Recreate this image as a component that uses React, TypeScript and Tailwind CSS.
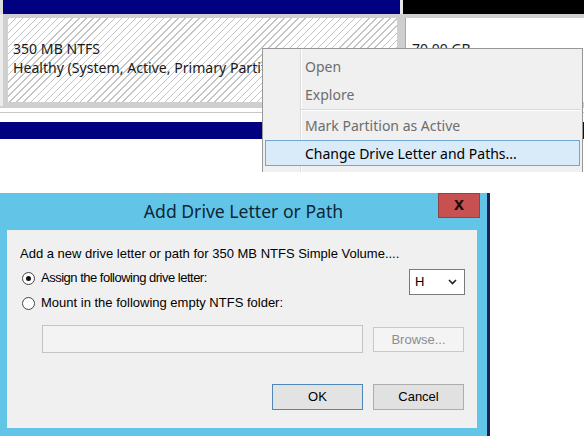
import { type ReactNode } from 'react'

const segoe = "font-['Noto_Sans','Open_Sans',sans-serif]"

function DiskView() {
  return (
    <div className={`h-[193px] flex flex-col ${segoe}`}>
      <div className="flex h-[14px]">
        <div className="w-[3px] bg-[#dcdcdc]" />
        <div className="w-[397px] bg-[#000080]" />
        <div className="w-[3px] bg-[#e6e6e6]" />
        <div className="flex-1 bg-black" />
      </div>
      <div className="flex h-[94px] bg-[#cfcfcf] pt-[4px] pb-[6px]">
        <div className="w-[3px] -my-[4px] bg-[#ececec]" />
        <div className="ml-[5px] w-[389px] bg-[image:repeating-linear-gradient(135deg,#c4c4c4_0px,#c4c4c4_1px,#ffffff_1px,#ffffff_5px)] pl-[5px] pt-[21px] text-[14.1px] leading-[19px] text-[#1a1a1a] overflow-hidden whitespace-nowrap">
          <div>350 MB NTFS</div>
          <div>Healthy (System, Active, Primary Partition)</div>
        </div>
        <div className="w-[8px]" />
        <div className="flex-1 bg-white border-l border-[#a8a8a8] pl-[6px] pt-[21px] text-[14px] leading-[19px] text-[#1a1a1a]">
          70.00 GB
        </div>
      </div>
      <div className="h-[4px] bg-white" />
      <div className="h-[1px] bg-[#c8c8c8]" />
      <div className="h-[9px] bg-white" />
      <div className="h-[17px] bg-[#000080]" />
      <div className="flex-1 bg-white" />
    </div>
  )
}

function MenuItem({ children, disabled, active }: { children: ReactNode; disabled?: boolean; active?: boolean }) {
  return (
    <div className="h-[28px] px-[2px] py-[1px]">
      <div
        className={`h-full flex items-center pl-[39px] border ${
          active ? 'border-[#6fa6d2] bg-[#d9eaf9]' : 'border-transparent'
        } ${disabled ? 'text-[#6d6d6d]' : 'text-black'}`}
      >
        {children}
      </div>
    </div>
  )
}

function ContextMenu() {
  return (
    <div className={`absolute left-[262px] top-[48px] w-[321px] h-[124px] bg-[#f0f0f0] border border-b-0 border-[#979797] pt-[3px] text-[14px] ${segoe}`}>
      <div className="absolute left-[37px] top-0 bottom-0 w-[1px] bg-[#dcdcdc]" />
      <div className="absolute left-[38px] top-0 bottom-0 w-[1px] bg-white" />
      <div className="relative">
        <MenuItem disabled>Open</MenuItem>
        <MenuItem disabled>Explore</MenuItem>
        <div className="h-[3px] ml-[38px] mr-[2px] flex flex-col justify-center">
          <div className="h-[1px] bg-[#d7d7d7]" />
          <div className="h-[1px] bg-white" />
        </div>
        <MenuItem disabled>Mark Partition as Active</MenuItem>
        <MenuItem active>Change Drive Letter and Paths...</MenuItem>
      </div>
    </div>
  )
}

function Radio({ checked }: { checked?: boolean }) {
  return (
    <div className="w-[13px] h-[13px] shrink-0 rounded-full border border-[#444] bg-white flex items-center justify-center">
      {checked && <div className="w-[5px] h-[5px] rounded-full bg-[#111]" />}
    </div>
  )
}

function Dialog() {
  return (
    <div className="flex h-[243px]">
      <div className="w-[487px] bg-[#62c5e7] flex flex-col">
        <div className="relative h-[37px] flex items-center justify-center">
          <span className={`text-[17.6px] text-[#0e2636] ${segoe}`}>Add Drive Letter or Path</span>
          <div className="absolute top-0 right-[7px] w-[42px] h-[25px] bg-[#c75050] border border-[#8c4545] flex items-center justify-center">
            <span className="text-[18px] font-bold leading-none text-[#1a0d0d] font-['Liberation_Sans',sans-serif] -mt-[4px]">x</span>
          </div>
        </div>
        <div className="flex-1 ml-[7px] mr-[10px] mb-[8px] bg-[#f0f0f0] flex flex-col text-[13px] leading-[16px] text-black font-['Liberation_Sans',Arial,sans-serif]">
          <div className="mt-[16px] pl-[13px] whitespace-nowrap">Add a new drive letter or path for 350 MB NTFS Simple Volume....</div>
          <div className="mt-[7px] flex justify-between pr-[12px]">
            <div className="mt-[1px] pl-[15px] flex items-center gap-[6px] h-[16px]">
              <Radio checked />
              <span className="tracking-[-0.5px]">Assign the following drive letter:</span>
            </div>
            <div className="w-[56px] h-[26px] bg-white border border-[#7a7a7a] flex items-center justify-between pl-[5px] pr-[7px] text-[13px]">
              <span>H</span>
              <svg width="9" height="6" viewBox="0 0 9 6">
                <path d="M1 1 L4.5 4.5 L8 1" fill="none" stroke="#222" strokeWidth="1.6" />
              </svg>
            </div>
          </div>
          <div className="pl-[15px] flex items-center gap-[6px] h-[16px]">
            <Radio />
            <span>Mount in the following empty NTFS folder:</span>
          </div>
          <div className="mt-[14px] flex items-start">
            <div className="ml-[35px] w-[321px] h-[28px] border border-[#c4c4c4] bg-[#f3f3f3]" />
            <div className="ml-[10px] mt-[2px] w-[91px] h-[25px] border border-[#c8c8c8] bg-[#f4f4f4] flex items-center justify-center text-[#8d8d8d]">
              Browse...
            </div>
          </div>
          <div className="mt-[31px] flex justify-end gap-[10px] pr-[13px]">
            <div className="w-[91px] h-[26px] border border-[#4f87b8] bg-[#e3e3e3] flex items-center justify-center">OK</div>
            <div className="w-[91px] h-[26px] border border-[#adadad] bg-[#e1e1e1] flex items-center justify-center">Cancel</div>
          </div>
        </div>
      </div>
      <div className="w-[3px] bg-[#16225c]" />
      <div className="flex-1 bg-white" />
    </div>
  )
}

export default function App() {
  return (
    <div className="relative w-[584px] h-[436px] overflow-hidden bg-white">
      <DiskView />
      <ContextMenu />
      <Dialog />
    </div>
  )
}
